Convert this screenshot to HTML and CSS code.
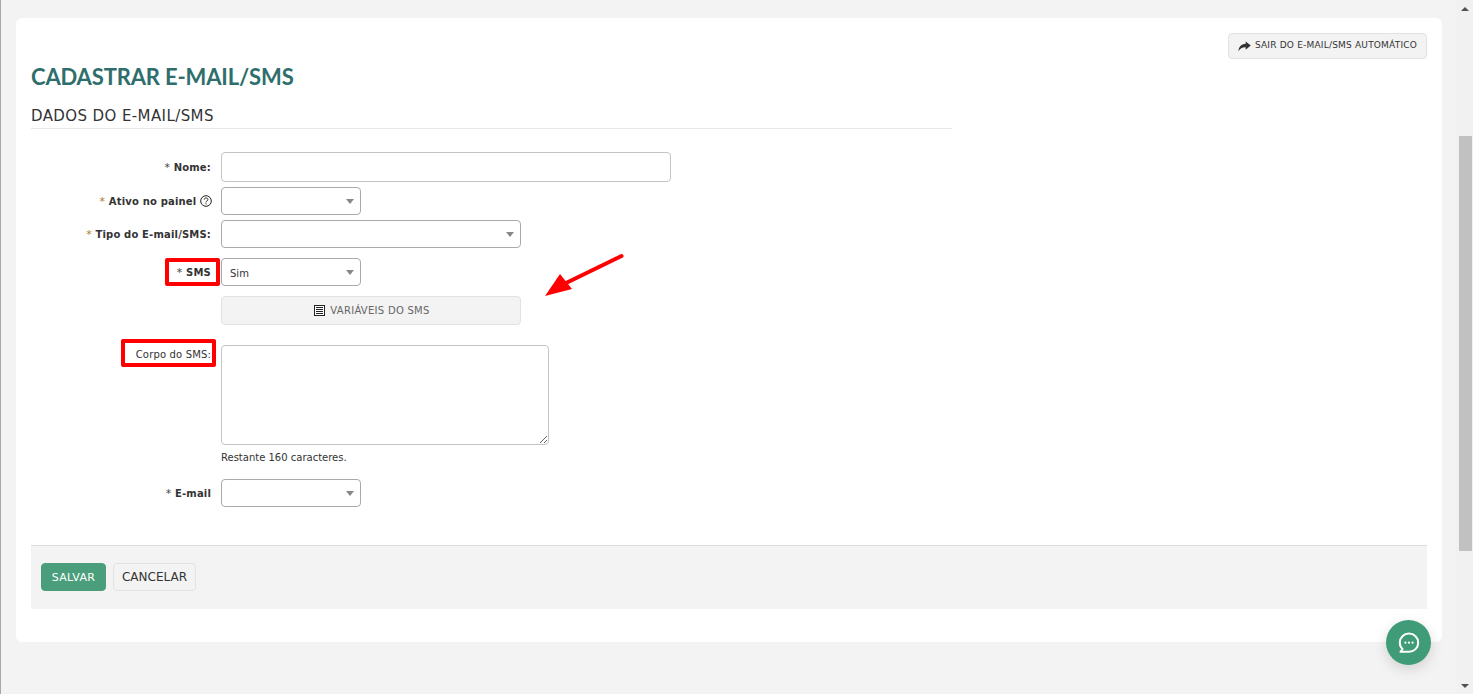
FILE: index.html
```html
<!DOCTYPE html>
<html lang="pt-BR">
<head>
<meta charset="utf-8">
<title>Cadastrar E-mail/SMS</title>
<link rel="stylesheet" href="styles.css">
</head>
<body>
<div class="app">
  <main class="page">
    <section class="card">
      <div class="top-actions">
        <button class="btn btn-exit" type="button">
          <svg class="icon-share" viewBox="0 0 16 14" width="13" height="11"><path d="M9.5 0.5 L16 5.8 L9.5 11 V7.9 C5.5 7.7 2.6 9 0.3 13 C0.6 7.5 3.8 3.6 9.5 3.4 Z" fill="#333"/></svg>
          SAIR DO E-MAIL/SMS AUTOMÁTICO
        </button>
      </div>
      <h1 class="title">CADASTRAR E-MAIL/SMS</h1>
      <h2 class="section">DADOS DO E-MAIL/SMS</h2>
      <form class="form">
        <div class="row row-nome">
          <label class="label"><span class="req">*</span> Nome:</label>
          <input class="field w450 h30" type="text">
        </div>
        <div class="row row-ativo">
          <label class="label"><span class="req orange">*</span> Ativo no painel
            <svg class="icon-help" viewBox="0 0 12 12" width="12" height="12"><circle cx="6" cy="6" r="5.3" fill="none" stroke="#222" stroke-width="1"/><path d="M4.2 4.6 C4.2 2.4 7.9 2.5 7.9 4.6 C7.9 6 6 5.8 6 7.4" fill="none" stroke="#222" stroke-width="1"/><rect x="5.5" y="8.3" width="1" height="1.1" fill="#222"/></svg>
          </label>
          <div class="select w140"><span class="caret"></span></div>
        </div>
        <div class="row row-tipo">
          <label class="label"><span class="req orange">*</span> Tipo do E-mail/SMS:</label>
          <div class="select w300"><span class="caret"></span></div>
        </div>
        <div class="row row-sms">
          <label class="label"><span class="req">*</span> SMS</label>
          <div class="select w140"><span class="select-text">Sim</span><span class="caret"></span></div>
        </div>
        <div class="row row-var">
          <span class="label"></span>
          <button class="btn btn-var" type="button">
            <svg class="icon-list" viewBox="0 0 11 11" width="11" height="11"><rect x="0.5" y="0.5" width="10" height="10" fill="#fff" stroke="#222"/><path d="M2 2.5h7M2 4.5h7M2 6.5h7M2 8.5h7" stroke="#222" stroke-width="1"/></svg>
            VARIÁVEIS DO SMS
          </button>
        </div>
        <div class="row row-corpo">
          <label class="label label-plain">Corpo do SMS:</label>
          <div class="stack">
            <textarea class="area"></textarea>
            <p class="hint">Restante 160 caracteres.</p>
          </div>
        </div>
        <div class="row row-email">
          <label class="label"><span class="req">*</span> E-mail</label>
          <div class="select w140"><span class="caret"></span></div>
        </div>
      </form>
      <div class="footer">
        <button class="btn btn-save" type="button">SALVAR</button>
        <button class="btn btn-cancel" type="button">CANCELAR</button>
      </div>
      <div class="mark mark-sms"></div>
      <div class="mark mark-corpo"></div>
      <svg class="arrow" viewBox="0 0 80 46" width="80" height="46"><path d="M76.5 4 L20 31.5" stroke="#f00" stroke-width="4" stroke-linecap="round" fill="none"/><path d="M0 44 L15 22 L27 37 Z" fill="#f00"/></svg>
    </section>
  </main>
  <div class="scrollbar">
    <span class="sb-up"></span>
    <div class="sb-track"><div class="sb-thumb"></div></div>
    <span class="sb-down"></span>
  </div>
</div>
<button class="chat" type="button" aria-label="Chat">
  <svg viewBox="0 0 24 24" width="24" height="24"><path d="M12 2.6 C17.2 2.6 21.2 6.6 21.2 11.7 C21.2 16.8 17.2 20.8 12 20.8 H3.4 L5.6 18 C3.8 16.4 2.8 14.2 2.8 11.7 C2.8 6.6 6.8 2.6 12 2.6 Z" fill="none" stroke="#fff" stroke-width="2" stroke-linejoin="round"/><circle cx="8.4" cy="11.7" r="1.1" fill="#fff"/><circle cx="12" cy="11.7" r="1.1" fill="#fff"/><circle cx="15.6" cy="11.7" r="1.1" fill="#fff"/></svg>
</button>
</body>
</html>
```
FILE: styles.css
```css
* { box-sizing: border-box; }
html, body { margin: 0; height: 694px; overflow: hidden; }
body { background: #f3f3f3; font-family: "DejaVu Sans", Verdana, sans-serif; color: #333; }
.app { display: flex; height: 694px; border-left: 1px solid #a8a8a8; }
.page { flex: 1; padding: 18px 14px 0 15px; min-width: 0; }
.card { position: relative; height: 624px; background: #fff; border-radius: 6px; padding: 15px; }
.top-actions { display: flex; justify-content: flex-end; height: 26px; }
.btn { font-family: "DejaVu Sans", Verdana, sans-serif; border: 1px solid #e2e2e2; background: #f3f3f3; border-radius: 4px; color: #333; padding: 0; cursor: pointer; }
.btn-exit { width: 199px; height: 26px; padding-bottom: 2px; font-size: 9px; letter-spacing: 0.2px; display: flex; align-items: center; justify-content: center; gap: 4px; }
.icon-share { flex: none; margin-top: 2px; }
.title { margin: 4px 0 0; font: 700 22px/28px Lato, sans-serif; color: #2e6e6c; letter-spacing: -0.15px; height: 28px; }
.section { margin: 14px 0 0; padding-top: 1px; width: 921px; height: 24px; font: 400 15px/20px "DejaVu Sans", sans-serif; letter-spacing: 0.4px; color: #333; border-bottom: 1px solid #e8e8e8; }
.form { display: flex; flex-direction: column; padding-top: 23px; }
.row { display: flex; align-items: center; gap: 10px; }
.row-ativo { margin-top: 5px; }
.row-tipo { margin-top: 5px; }
.row-sms { margin-top: 10px; }
.row-var { margin-top: 10px; }
.row-corpo { margin-top: 20px; align-items: flex-start; }
.row-corpo .label { padding-top: 4px; }
.row-email { margin-top: 15px; }
.label { flex: none; width: 180px; text-align: right; font-size: 10px; font-weight: 700; letter-spacing: 0.17px; color: #333; }
.label-plain { font-weight: 400; letter-spacing: 0.16px; }
.req { font-weight: 400; font-size: 11px; line-height: 10px; color: #444; }
.orange { color: #b07a20; }
.icon-help { vertical-align: -2px; margin-right: -1px; }
.field { border: 1px solid #c4c4c4; border-radius: 4px; background: #fff; display: block; }
.w450 { width: 450px; }
.h30 { height: 30px; }
.select { position: relative; display: flex; align-items: center; height: 28px; border: 1px solid #aaa; border-radius: 4px; background: #fff; }
.w140 { width: 140px; }
.w300 { width: 300px; }
.select-text { font-size: 10px; padding: 2px 0 0 8px; color: #333; }
.caret { position: absolute; right: 6px; top: 11px; border-style: solid; border-width: 5px 4px 0; border-color: #888 transparent transparent; }
.btn-var { width: 300px; height: 29px; font-size: 10px; letter-spacing: 0.28px; color: #666; display: flex; align-items: center; justify-content: center; gap: 5px; padding-left: 2px; }
.icon-list { flex: none; }
.stack { display: flex; flex-direction: column; }
.area { display: block; width: 328px; height: 100px; border: 1px solid #c4c4c4; border-radius: 4px; background: #fff; resize: both; margin: 0; }
.hint { margin: 7px 0 0; height: 12px; font-size: 10px; line-height: 12px; color: #333; }
.footer { display: flex; align-items: center; gap: 7px; margin-top: 38px; height: 64px; padding: 0 10px 2px; background: #f3f3f3; border-top: 1px solid #dcdcdc; }
.btn-save { width: 65px; height: 28px; padding-top: 2px; background: #4a9e7c; border-color: #4a9e7c; color: #fff; font-size: 11px; letter-spacing: 0.3px; }
.btn-cancel { width: 83px; height: 28px; font-size: 12px; }
.mark { position: absolute; border: 4px solid #f00; border-radius: 2px; }
.mark-sms { left: 149px; top: 240px; width: 55px; height: 28px; }
.mark-corpo { left: 105px; top: 321px; width: 95px; height: 28px; }
.arrow { position: absolute; left: 529px; top: 234px; }
.scrollbar { flex: none; width: 17px; display: flex; flex-direction: column; background: #f1f1f1; position: relative; }
.sb-up, .sb-down { flex: none; height: 17px; display: flex; align-items: center; justify-content: center; }
.sb-up::before { content: ""; border-style: solid; border-width: 0 4px 4px; border-color: transparent transparent #505050; }
.sb-down::before { content: ""; border-style: solid; border-width: 4px 4px 0; border-color: #505050 transparent transparent; }
.sb-track { flex: 1; padding-top: 119px; }
.sb-thumb { height: 415px; margin: 0 1px 0 3px; background: #c1c1c1; }
.chat { position: absolute; left: 1386px; top: 620px; width: 45px; height: 45px; border-radius: 50%; border: 0; padding: 0; background: #3f9b78; display: flex; align-items: center; justify-content: center; box-shadow: 0 4px 14px rgba(0,0,0,.14); }
```
